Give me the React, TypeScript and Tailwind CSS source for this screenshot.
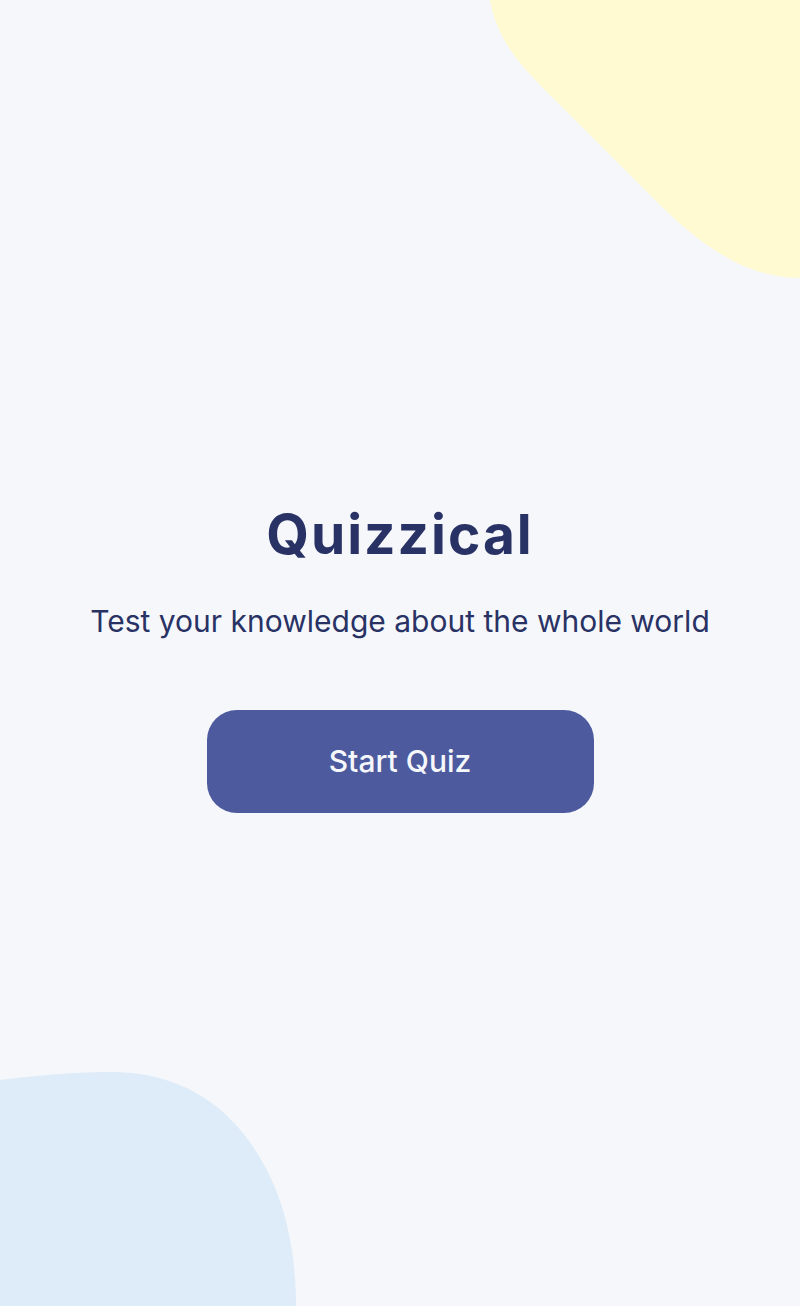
import React from 'react';

const YellowBlob = () => (
  <svg className="absolute top-0 right-0" width="310" height="280" viewBox="490 0 310 280">
    <path
      d="M490,0 C497,40 520,65 550,95 L655,200 C700,245 745,278 800,278 L800,0 Z"
      fill="#FFFAD1"
    />
  </svg>
);

const BlueBlob = () => (
  <svg className="absolute bottom-0 left-0" width="300" height="236" viewBox="0 1070 300 236">
    <path
      d="M0,1080 C35,1076 70,1072 110,1072 C150,1072 185,1082 217,1107 C245,1130 262,1158 274,1185 C288,1218 296,1260 296,1306 L0,1306 Z"
      fill="#DEEBF8"
    />
  </svg>
);

export default function App() {
  return (
    <div className="relative min-h-[1306px] overflow-hidden bg-[#F5F7FB] font-['Inter',sans-serif] text-[#293264]">
      <YellowBlob />
      <BlueBlob />
      <main className="relative flex min-h-[1306px] flex-col items-center justify-center pt-[14px]">
        <h1 className="text-[55px] font-bold leading-none tracking-[2px]">Quizzical</h1>
        <p className="mt-[44px] text-[30px] leading-none">Test your knowledge about the whole world</p>
        <button className="mt-[74px] h-[103px] w-[387px] rounded-[30px] bg-[#4D5B9E] text-[30px] font-medium text-[#F5F7FB]">
          Start Quiz
        </button>
      </main>
    </div>
  );
}
